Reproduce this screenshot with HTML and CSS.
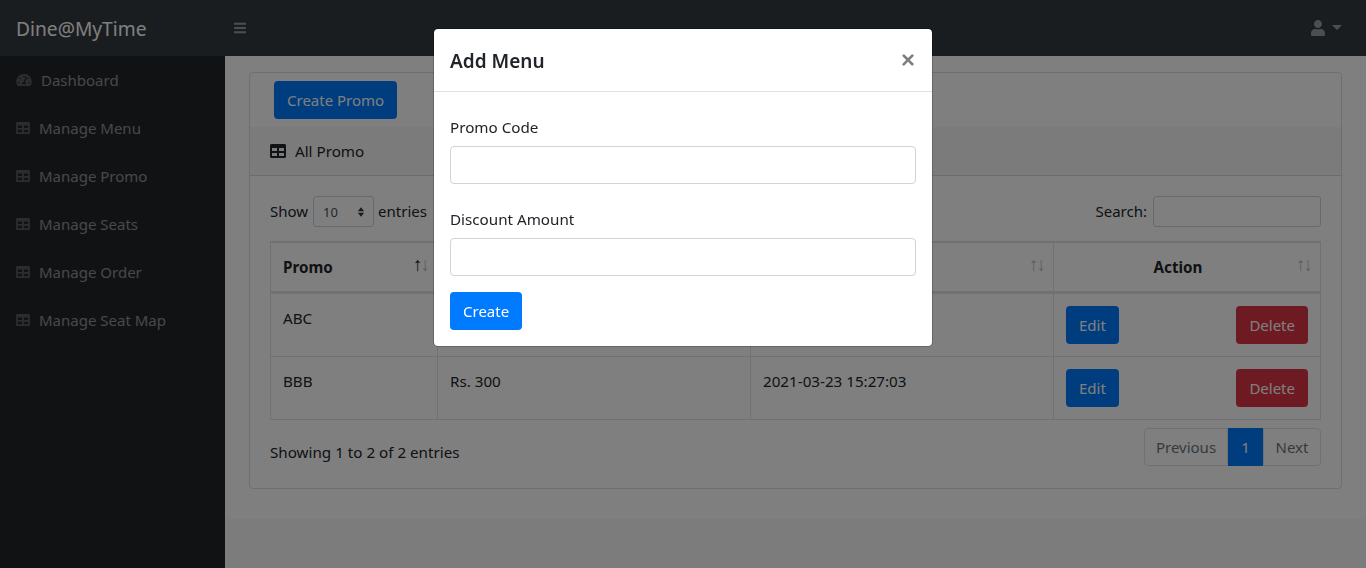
FILE: index.html
```html
<!DOCTYPE html>
<html lang="en">
<head>
    <meta charset="UTF-8">
    <meta name="viewport" content="width=device-width, initial-scale=1.0">
    <title>Dine@MyTime</title>
    <link rel="stylesheet" href="styles.css">
</head>
<body>
    <svg class="icon-defs" aria-hidden="true">
        <symbol id="i-table" viewBox="0 32 512 448"><path d="M464 32H48C21.49 32 0 53.49 0 80v352c0 26.51 21.49 48 48 48h416c26.51 0 48-21.49 48-48V80c0-26.51-21.49-48-48-48zM224 416H64v-96h160v96zm0-160H64v-96h160v96zm224 160H288v-96h160v96zm0-160H288v-96h160v96z"/></symbol>
        <symbol id="i-gauge" viewBox="0 32 576 448"><path d="M288 32C128.94 32 0 160.94 0 320c0 52.8 14.25 102.26 39.06 144.8 5.61 9.62 16.3 15.2 27.44 15.2h443c11.14 0 21.83-5.58 27.44-15.2C561.75 422.26 576 372.8 576 320c0-159.06-128.94-288-288-288zm0 64c14.71 0 26.58 10.13 30.32 23.65-1.11 2.26-2.64 4.23-3.45 6.67l-9.22 27.67c-5.13 3.49-10.97 6.01-17.64 6.01-17.67 0-32-14.33-32-32S270.33 96 288 96zM96 384c-17.67 0-32-14.33-32-32s14.33-32 32-32 32 14.33 32 32-14.33 32-32 32zm48-160c-17.67 0-32-14.33-32-32s14.33-32 32-32 32 14.33 32 32-14.33 32-32 32zm246.77-72.41l-61.33 184C343.13 347.33 352 364.54 352 384c0 11.72-3.38 22.55-8.88 32H232.88c-5.5-9.45-8.88-20.28-8.88-32 0-33.94 26.5-61.43 59.9-63.59l61.34-184.01c4.17-12.56 17.73-19.45 30.36-15.17 12.57 4.19 19.35 17.79 15.17 30.36zm14.66 57.2l15.52-46.55c3.47-1.29 7.13-2.23 11.05-2.23 17.67 0 32 14.33 32 32s-14.33 32-32 32c-11.38-.01-20.89-6.28-26.57-15.22zM480 384c-17.67 0-32-14.33-32-32s14.33-32 32-32 32 14.33 32 32-14.33 32-32 32z"/></symbol>
        <symbol id="i-user" viewBox="0 0 448 512"><path d="M224 256c70.7 0 128-57.3 128-128S294.7 0 224 0 96 57.3 96 128s57.3 128 128 128zm89.6 32h-16.7c-22.2 10.2-46.9 16-72.9 16s-50.6-5.8-72.9-16h-16.7C60.2 288 0 348.2 0 422.4V464c0 26.5 21.5 48 48 48h352c26.5 0 48-21.5 48-48v-41.6c0-74.2-60.2-134.4-134.4-134.4z"/></symbol>
        <symbol id="i-bars" viewBox="0 0 448 512"><path d="M16 132h416c8.8 0 16-7.2 16-16V76c0-8.8-7.2-16-16-16H16C7.2 60 0 67.2 0 76v40c0 8.8 7.2 16 16 16zm0 160h416c8.8 0 16-7.2 16-16v-40c0-8.8-7.2-16-16-16H16c-8.8 0-16 7.2-16 16v40c0 8.8 7.2 16 16 16zm0 160h416c8.8 0 16-7.2 16-16v-40c0-8.8-7.2-16-16-16H16c-8.8 0-16 7.2-16 16v40c0 8.8 7.2 16 16 16z"/></symbol>
    </svg>

    <nav class="topnav">
        <a class="brand" href="#">Dine@MyTime</a>
        <button class="toggle" type="button"><svg class="icon-bars"><use href="#i-bars"/></svg></button>
        <a class="user-menu" href="#"><svg class="icon-user"><use href="#i-user"/></svg><span class="caret"></span></a>
    </nav>

    <div class="layout">
        <aside class="sidebar">
            <a class="side-link" href="#"><svg class="icon-gauge"><use href="#i-gauge"/></svg>Dashboard</a>
            <a class="side-link" href="#"><svg class="icon-table"><use href="#i-table"/></svg>Manage Menu</a>
            <a class="side-link" href="#"><svg class="icon-table"><use href="#i-table"/></svg>Manage Promo</a>
            <a class="side-link" href="#"><svg class="icon-table"><use href="#i-table"/></svg>Manage Seats</a>
            <a class="side-link" href="#"><svg class="icon-table"><use href="#i-table"/></svg>Manage Order</a>
            <a class="side-link" href="#"><svg class="icon-table"><use href="#i-table"/></svg>Manage Seat Map</a>
        </aside>

        <div class="content">
            <main class="main">
                <div class="card">
                    <div class="card-top"><button class="btn btn-primary" type="button">Create Promo</button></div>
                    <div class="card-header"><svg class="icon-table"><use href="#i-table"/></svg>All Promo</div>
                    <div class="card-body">
                        <div class="dt-top">
                            <label class="dt-length">Show <span class="fake-select">10<svg class="select-arrows" viewBox="0 0 10 14"><path d="M5 1l4 5H1zM5 13L1 8h8z"/></svg></span> entries</label>
                            <label class="dt-search">Search: <input class="input-sm" type="search"></label>
                        </div>
                        <table class="table">
                            <thead>
                                <tr>
                                    <th class="col-promo">Promo<span class="sort"><i class="on">↑</i><i>↓</i></span></th>
                                    <th class="col-amount"><span class="sort"><i>↑</i><i>↓</i></span></th>
                                    <th class="col-date"><span class="sort"><i>↑</i><i>↓</i></span></th>
                                    <th class="col-action">Action<span class="sort"><i>↑</i><i>↓</i></span></th>
                                </tr>
                            </thead>
                            <tbody>
                                <tr>
                                    <td>ABC</td>
                                    <td></td>
                                    <td></td>
                                    <td><div class="actions"><button class="btn btn-primary" type="button">Edit</button><button class="btn btn-danger" type="button">Delete</button></div></td>
                                </tr>
                                <tr>
                                    <td>BBB</td>
                                    <td>Rs. 300</td>
                                    <td>2021-03-23 15:27:03</td>
                                    <td><div class="actions"><button class="btn btn-primary" type="button">Edit</button><button class="btn btn-danger" type="button">Delete</button></div></td>
                                </tr>
                            </tbody>
                        </table>
                        <div class="dt-bottom">
                            <div class="dt-info">Showing 1 to 2 of 2 entries</div>
                            <ul class="pagination">
                                <li class="page-prev">Previous</li>
                                <li class="page-num">1</li>
                                <li class="page-next">Next</li>
                            </ul>
                        </div>
                    </div>
                </div>
            </main>
            <footer class="footer"></footer>
        </div>
    </div>

    <div class="backdrop"></div>
    <div class="modal">
        <div class="modal-box">
            <div class="modal-header">
                <h5 class="modal-title">Add Menu</h5>
                <button class="close" type="button">×</button>
            </div>
            <form class="modal-body">
                <label class="field-label" for="promo-code">Promo Code</label>
                <input class="field" type="text" id="promo-code">
                <label class="field-label" for="discount">Discount Amount</label>
                <input class="field" type="text" id="discount">
                <button class="btn btn-primary" type="button">Create</button>
            </form>
        </div>
    </div>
</body>
</html>
```

FILE: styles.css
```css
* {
    box-sizing: border-box;
}
body {
    margin: 0;
    height: 568px;
    overflow: hidden;
    font-family: "Noto Sans", "Open Sans", sans-serif;
    font-size: 15.2px;
    line-height: 24px;
    color: #212529;
    background: #fff;
    display: flex;
    flex-direction: column;
}
a {
    text-decoration: none;
}
svg {
    fill: currentColor;
}
.icon-defs {
    display: none;
}

/* top bar */
.topnav {
    height: 56px;
    background: #343a40;
    display: flex;
    align-items: center;
    flex-shrink: 0;
}
.brand {
    width: 225px;
    padding: 2px 0 0 16px;
    font-size: 19.2px;
    color: #fff;
    flex-shrink: 0;
}
.toggle {
    padding: 0;
    margin-left: 9px;
    width: 12px;
    height: 14px;
    background: none;
    border: none;
    color: rgba(255, 255, 255, 0.5);
    display: flex;
}
.icon-bars {
    width: 12px;
    height: 14px;
}
.user-menu {
    margin-left: auto;
    margin-right: 24px;
    color: rgba(255, 255, 255, 0.5);
    display: flex;
    align-items: center;
}
.icon-user {
    width: 14px;
    height: 16px;
}
.caret {
    margin: 0 0 2px 7px;
    border-top: 5px solid;
    border-left: 5px solid transparent;
    border-right: 5px solid transparent;
}

/* sidebar */
.layout {
    flex: 1;
    display: flex;
    min-height: 0;
}
.sidebar {
    width: 225px;
    flex-shrink: 0;
    background: #212529;
}
.side-link {
    height: 48px;
    padding-left: 16px;
    display: flex;
    align-items: center;
    font-size: 15px;
    color: rgba(255, 255, 255, 0.5);
}
.side-link svg {
    color: rgba(255, 255, 255, 0.25);
}
.icon-table {
    width: 14px;
    height: 12px;
    margin-right: 9px;
    flex-shrink: 0;
}
.icon-gauge {
    width: 16px;
    height: 12px;
    margin-right: 9px;
    flex-shrink: 0;
}

/* content */
.content {
    flex: 1;
    display: flex;
    flex-direction: column;
    min-width: 0;
}
.main {
    flex: 1;
    padding: 16px 24px 0;
}
.footer {
    height: 49px;
    background: #f8f9fa;
}
.card {
    border: 1px solid rgba(0, 0, 0, 0.125);
    border-radius: 4px;
}
.card-top {
    padding: 8px 24px;
}
.card-header {
    height: 49px;
    padding: 0 20px;
    display: flex;
    align-items: center;
    background: rgba(0, 0, 0, 0.03);
    border-bottom: 1px solid rgba(0, 0, 0, 0.125);
}
.card-header .icon-table {
    width: 16px;
    height: 14px;
    color: #212529;
}
.card-body {
    padding: 20px 20px 22px;
}
.btn {
    height: 38px;
    padding: 0 12px;
    font: inherit;
    font-size: 15px;
    color: #fff;
    border: 1px solid transparent;
    border-radius: 4px;
}
.btn-primary {
    background: #007bff;
}
.btn-danger {
    background: #dc3545;
}

/* datatable */
.dt-top {
    display: flex;
    justify-content: space-between;
    align-items: center;
    height: 31px;
    margin-bottom: 14px;
}
.dt-length, .dt-search {
    display: flex;
    align-items: center;
    padding-bottom: 2px;
    font-size: 15px;
}
.fake-select {
    width: 61px;
    height: 31px;
    margin: 2px 4px 0 5px;
    padding: 1px 8px 0 9px;
    font-size: 13px;
    color: #495057;
    border: 1px solid #ced4da;
    border-radius: 3px;
    display: flex;
    align-items: center;
    justify-content: space-between;
}
.select-arrows {
    width: 8px;
    height: 12px;
    color: #343a40;
}
.input-sm {
    width: 168px;
    height: 31px;
    margin: 2px 0 0 6px;
    border: 1px solid #ced4da;
    border-radius: 3px;
    background: #fff;
}
.table {
    width: 1051px;
    table-layout: fixed;
    border-collapse: separate;
    border-spacing: 0;
    border: 1px solid #dee2e6;
}
.table th, .table td {
    height: 63px;
    padding: 12px;
    border-top: 1px solid #dee2e6;
    border-right: 1px solid #dee2e6;
    text-align: left;
    vertical-align: top;
}
.table th {
    position: relative;
    height: 51px;
    padding-right: 30px;
    font-weight: 700;
    border-bottom: 2px solid #dee2e6;
}
.table th:last-child, .table td:last-child {
    border-right: none;
}
.col-promo {
    width: 167px;
}
.col-amount {
    width: 313px;
}
.col-date {
    width: 303px;
}
.table .col-action {
    text-align: center;
}
.sort {
    position: absolute;
    top: 10px;
    right: 9px;
    font-family: "Liberation Sans", sans-serif;
    font-size: 19px;
    font-weight: 400;
    letter-spacing: -2px;
}
.sort i {
    font-style: normal;
    opacity: 0.3;
}
.sort i.on {
    opacity: 1;
}
.actions {
    display: flex;
    justify-content: space-between;
}
.dt-bottom {
    display: flex;
    justify-content: space-between;
    margin-top: 8px;
}
.dt-info {
    padding-top: 12px;
}
.pagination {
    list-style: none;
    margin: 0;
    padding: 0;
    display: flex;
    height: 38px;
    font-size: 15px;
    color: #6c757d;
}
.pagination li {
    display: flex;
    align-items: center;
    justify-content: center;
    border: 1px solid #dee2e6;
}
.page-prev {
    width: 84px;
    border-radius: 4px 0 0 4px;
}
.pagination .page-num {
    width: 35px;
    color: #fff;
    background: #007bff;
    border-color: #007bff;
}
.page-next {
    width: 58px;
    border-radius: 0 4px 4px 0;
}

/* modal */
.backdrop {
    position: fixed;
    inset: 0;
    background: rgba(0, 0, 0, 0.5);
}
.modal {
    position: fixed;
    top: 28px;
    left: 433px;
    width: 500px;
}
.modal-box {
    background: #fff;
    border: 1px solid rgba(0, 0, 0, 0.2);
    background-clip: padding-box;
    border-radius: 5px;
}
.modal-header {
    height: 63px;
    padding: 2px 17px 0 16px;
    display: flex;
    align-items: center;
    justify-content: space-between;
    border-bottom: 1px solid #dee2e6;
}
.modal-title {
    margin: 0;
    font-size: 19px;
    font-weight: 600;
}
.close {
    padding: 0;
    margin-top: -2px;
    font: 700 24px/1 "Liberation Sans", sans-serif;
    color: #000;
    opacity: 0.5;
    background: none;
    border: none;
}
.modal-body {
    padding: 23px 16px 16px;
    display: flex;
    flex-direction: column;
    align-items: flex-start;
}
.field-label {
    margin-bottom: 7px;
}
.field {
    width: 100%;
    height: 38px;
    margin-bottom: 23px;
    border: 1px solid #ced4da;
    border-radius: 4px;
}
.field:nth-of-type(2) {
    margin-bottom: 16px;
}
```
